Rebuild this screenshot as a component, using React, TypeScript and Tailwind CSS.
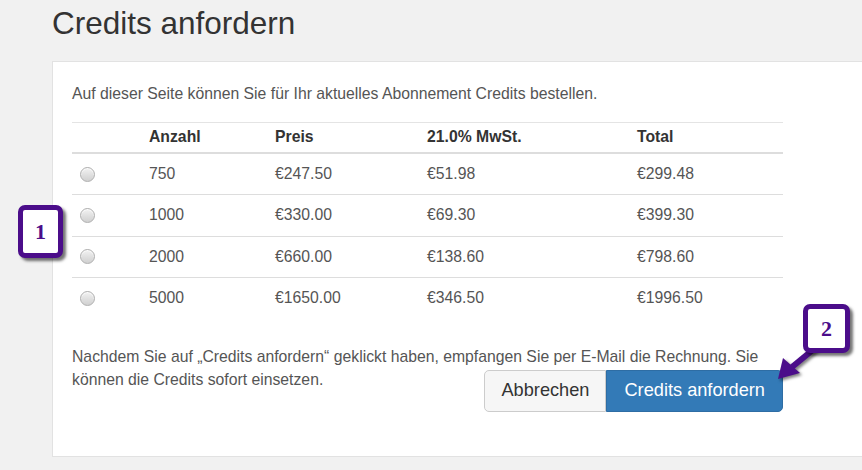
import React from 'react';

const rows = [
  { qty: '750', price: '€247.50', vat: '€51.98', total: '€299.48' },
  { qty: '1000', price: '€330.00', vat: '€69.30', total: '€399.30' },
  { qty: '2000', price: '€660.00', vat: '€138.60', total: '€798.60' },
  { qty: '5000', price: '€1650.00', vat: '€346.50', total: '€1996.50' },
];

function Radio() {
  return (
    <span className="block w-[15px] h-[15px] rounded-full border border-[#b0b0b0] bg-gradient-to-b from-[#f2f2f2] to-[#d0d0d0] shadow-[inset_0_1px_1px_rgba(255,255,255,0.8)]" />
  );
}

function Marker({ n, className }: { n: string; className: string }) {
  return (
    <div
      className={`absolute flex items-center justify-center bg-white border-[5px] border-[#4b0d8a] rounded-[7px] shadow-[3px_3px_3px_rgba(0,0,0,0.55)] ${className}`}
    >
      <span className="text-[#4b0d8a] font-bold text-[22px] leading-none [font-family:'Liberation_Serif','DejaVu_Serif',serif]">
        {n}
      </span>
    </div>
  );
}

export default function App() {
  return (
    <div className="relative w-[862px] h-[470px] overflow-hidden bg-[#f1f1f1] [font-family:'Liberation_Sans',Arial,sans-serif]">
      <div className="pl-[52px] pt-[6px]">
        <h1 className="text-[31.5px] leading-[35px] text-[#333] mb-[20px]">Credits anfordern</h1>

        <div className="w-[840px] bg-white border border-[#e2e2e2] px-[19px] pt-[21px] pb-[44px] text-[15.75px] leading-[22.5px] text-[#555]">
          <p className="mb-[16px]">
            Auf dieser Seite können Sie für Ihr aktuelles Abonnement Credits bestellen.
          </p>

          <table className="w-[711px] border-collapse table-fixed">
            <colgroup>
              <col className="w-[68px]" />
              <col className="w-[126px]" />
              <col className="w-[152px]" />
              <col className="w-[210px]" />
              <col className="w-[155px]" />
            </colgroup>
            <thead>
              <tr className="border-t border-[#e4e4e4] border-b-2 border-b-[#dddddd] h-[31px] text-[#333] font-bold text-left">
                <th />
                <th className="px-[9px]">Anzahl</th>
                <th className="px-[9px]">Preis</th>
                <th className="px-[9px]">21.0% MwSt.</th>
                <th className="px-[9px]">Total</th>
              </tr>
            </thead>
            <tbody>
              {rows.map((r, i) => (
                <tr key={r.qty} className={`h-[41.5px] ${i < rows.length - 1 ? 'border-b border-[#dddddd]' : ''}`}>
                  <td className="pl-[8px]">
                    <Radio />
                  </td>
                  <td className="px-[9px]">{r.qty}</td>
                  <td className="px-[9px]">{r.price}</td>
                  <td className="px-[9px]">{r.vat}</td>
                  <td className="px-[9px]">{r.total}</td>
                </tr>
              ))}
            </tbody>
          </table>

          <div className="w-[711px] mt-[27px]">
            <p>Nachdem Sie auf „Credits anfordern“ geklickt haben, empfangen Sie per E-Mail die Rechnung. Sie</p>
            <div className="flex justify-between items-start">
              <p>können die Credits sofort einsetzen.</p>
              <div className="flex h-[42px] text-[18.2px] mt-[1px]">
                <button className="px-[16px] bg-[#f6f6f6] border border-[#cccccc] rounded-l-[5px] text-[#333]">
                  Abbrechen
                </button>
                <button className="px-[17px] bg-[#337ab7] border border-[#2e6da4] rounded-r-[5px] text-white">
                  Credits anfordern
                </button>
              </div>
            </div>
          </div>
        </div>
      </div>

      <svg className="absolute inset-0 pointer-events-none" width="862" height="470" viewBox="0 0 862 470">
        <g style={{ filter: 'drop-shadow(2px 2px 1.5px rgba(0,0,0,0.5))' }}>
          <line x1="820" y1="344" x2="792" y2="367" stroke="#4b0d8a" strokeWidth="6" />
          <polygon points="778,379 783,358 800,373" fill="#4b0d8a" />
        </g>
      </svg>

      <Marker n="1" className="left-[18px] top-[205px] w-[45px] h-[53px]" />
      <Marker n="2" className="left-[803px] top-[304px] w-[47px] h-[49px]" />
    </div>
  );
}
